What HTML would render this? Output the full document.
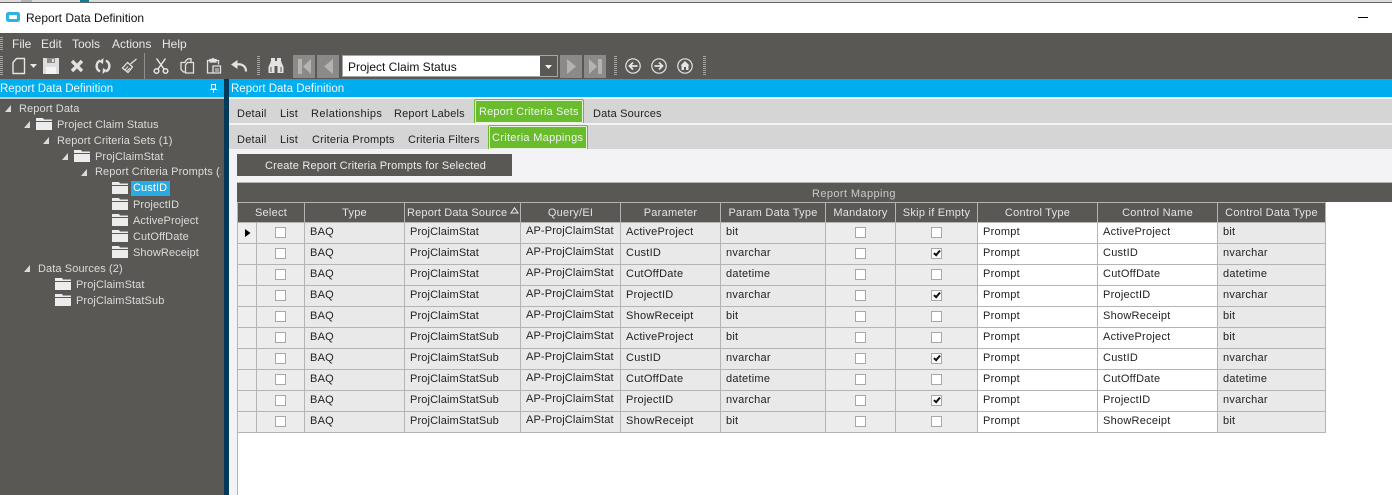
<!DOCTYPE html>
<html><head><meta charset="utf-8"><title>Report Data Definition</title>
<style>
html,body{margin:0;padding:0;background:#fff}
body{position:relative;width:1392px;height:495px;overflow:hidden;font-family:"Liberation Sans",Arial,sans-serif;font-size:11px;color:#222}
.b{position:absolute}
.t{position:absolute;white-space:nowrap;line-height:14px}
.m{color:#e8e8e8;font-size:12px;top:37px}
.s{color:#dcdcdc;font-size:11px;letter-spacing:.1px}
.h{color:#222;font-size:11px;letter-spacing:.25px}
.g{color:#f2f2f2;font-size:11px;letter-spacing:.2px}
.f{position:absolute;width:16px;height:12px}
.tr{position:absolute;width:0;height:0;border-left:6px solid transparent;border-bottom:7px solid #dcdcdc}
.gr{position:absolute;width:3px;background:repeating-linear-gradient(#a5a5a5 0 1px,transparent 1px 2px)}
.btn{position:absolute;top:55px;width:22px;height:23px;background:#8b8a88}
svg{position:absolute;overflow:visible}
table{position:absolute;border-collapse:collapse;table-layout:fixed;width:1088px;left:237px}
td,th{border:1px solid #b4b4b4;padding:0;overflow:hidden;white-space:nowrap;font-weight:normal;letter-spacing:.25px}
th{height:18px;padding-top:1px;background:#595855;color:#e4e4e4;font-size:11px}
th.l{text-align:left;padding-left:2px;letter-spacing:.17px}
td{height:21px;background:#e9e9e9;font-size:11px;color:#222;padding:0 0 3px 5px;box-sizing:border-box}
td:nth-child(4){letter-spacing:.13px}
td.n{padding:0;background:#eee}
td.q{padding-bottom:5px;letter-spacing:.13px}
td.w{background:#fff}
td.x{padding:0 0 2px;text-align:center;background:#ececec}
i{display:inline-block;width:9px;height:9px;border:1px solid #a8a8a8;background:#fff;position:relative;vertical-align:middle}
i.k:after{content:"";position:absolute;left:3px;top:0;width:2px;height:5px;border:solid #111;border-width:0 2px 2px 0;transform:rotate(40deg)}
</style></head><body>

<div class="b" style="left:0;top:0;width:1392px;height:2px;background:#dcdcdc"></div>
<div class="b" style="left:21px;top:0;width:11px;height:2px;background:#b5b5b5"></div>
<div class="b" style="left:80px;top:0;width:9px;height:2px;background:#0d7f9c"></div>
<div class="b" style="left:0;top:2px;width:1392px;height:1px;background:#666"></div>

<svg style="left:6px;top:12px" width="15" height="11" viewBox="0 0 15 11"><rect x="0" y="0" width="14" height="10" rx="2.5" fill="#2cb2e4"/><rect x="3" y="3" width="8" height="4" rx="1" fill="#fff"/></svg>
<span class="t" style="left:26px;top:11px;font-size:12px;color:#111">Report Data Definition</span>
<div class="b" style="left:1358px;top:17px;width:10px;height:1px;background:#000"></div>

<div class="b" style="left:0;top:33px;width:1392px;height:46px;background:#595855"></div>
<div class="gr" style="left:0;top:37px;height:14px"></div>
<div class="gr" style="left:0;top:56px;height:20px"></div>
<span class="t m" style="left:12px">File</span>
<span class="t m" style="left:41px">Edit</span>
<span class="t m" style="left:72px">Tools</span>
<span class="t m" style="left:112px">Actions</span>
<span class="t m" style="left:162px">Help</span>

<svg style="left:11px;top:57px" width="16" height="18" viewBox="0 0 16 18" fill="none" stroke="#e6e6e6" stroke-width="1.4"><path d="M5.5 1.5H13.5V16.5H2V5.5Z" stroke-linejoin="round"/></svg>
<svg style="left:30px;top:64px" width="7" height="4" viewBox="0 0 7 4"><path d="M0 0H7L3.5 4Z" fill="#e6e6e6"/></svg>
<svg style="left:43px;top:58px" width="16" height="16" viewBox="0 0 16 16"><path d="M0 0H16V16H0Z" fill="#dedede"/><path d="M4 0H12V5H4Z" fill="#8c8b89"/><path d="M9 1H11V4H9Z" fill="#dedede"/><path d="M3 9H13V16H3Z" fill="#f4f4f4"/></svg>
<svg style="left:70px;top:59px" width="14" height="14" viewBox="0 0 14 14"><path d="M2 2L12 12M12 2L2 12" stroke="#e2e2e2" stroke-width="3.4"/></svg>
<svg style="left:95px;top:58px" width="16" height="16" viewBox="0 0 16 16" fill="none" stroke="#e2e2e2" stroke-width="2.4"><path d="M5 13.5C0.5 11 0.5 5 5 2.5"/><path d="M11 2.5C15.5 5 15.5 11 11 13.5"/><path d="M8.5 0L4 3.5L8 6Z" fill="#e2e2e2" stroke="none"/><path d="M7.5 16L12 12.5L8 10Z" fill="#e2e2e2" stroke="none"/></svg>
<svg style="left:121px;top:58px" width="17" height="16" viewBox="0 0 17 16" fill="none" stroke="#e2e2e2" stroke-width="1.3"><path d="M9.5 6L15.5 1"/><path d="M6.5 4.5L11.5 9L7 14.5L1.5 10Z"/><path d="M4 12L7 8.5M6 13L9 10" stroke-width="1"/></svg>
<div class="b" style="left:144px;top:53px;width:1px;height:26px;background:#8f8e8c"></div>
<svg style="left:153px;top:58px" width="16" height="16" viewBox="0 0 16 16" fill="none" stroke="#e6e6e6" stroke-width="1.5"><circle cx="3.5" cy="13" r="2.3"/><circle cx="12.5" cy="13" r="2.3"/><path d="M5 11L12.5 0.5M11 11L3.5 0.5"/></svg>
<svg style="left:180px;top:58px" width="15" height="16" viewBox="0 0 15 16" fill="none" stroke="#e2e2e2" stroke-width="1.3"><path d="M5 3.5L8 .8H11V4"/><path d="M5 3.5V4.5H1V11.5L3.5 14H5"/><path d="M7.5 4.5H13.5V15H5.5V7Z"/></svg>
<svg style="left:206px;top:58px" width="15" height="16" viewBox="0 0 15 16" fill="none" stroke="#e2e2e2" stroke-width="1.3"><path d="M4 2.5H1.5V15H6.5"/><path d="M10 2.5H12.5V6.5"/><path d="M4 1.5H6L7 .5L8 1.5H10V4H4Z" fill="#e2e2e2"/><path d="M7 8H14.5V15H7Z"/><path d="M9 11H13M9 13H13" stroke-width="1"/></svg>
<svg style="left:231px;top:60px" width="16" height="12" viewBox="0 0 16 12" fill="none"><path d="M15 11.5C15 6 11 3.5 5 4.5" stroke="#e2e2e2" stroke-width="2.2"/><path d="M6.5 0L0 4.5L6.5 9Z" fill="#e2e2e2"/></svg>
<div class="gr" style="left:257px;top:56px;height:19px"></div>
<svg style="left:268px;top:58px" width="16" height="15" viewBox="0 0 16 15"><path d="M3 0H7V3H9V0H13V3L15.5 9V15H9.5V8H6.5V15H.5V9L3 3Z" fill="#e2e2e2"/><path d="M3 9V14M13 9V14" stroke="#595855"/></svg>

<div class="btn" style="left:293px"></div>
<svg style="left:298px;top:59px" width="13" height="15" viewBox="0 0 13 15"><path d="M0 0H4V15H0ZM13 0V15L5 7.5Z" fill="#b4b3b2"/></svg>
<div class="btn" style="left:317px"></div>
<svg style="left:324px;top:59px" width="9" height="15" viewBox="0 0 9 15"><path d="M9 0V15L0 7.5Z" fill="#b4b3b2"/></svg>
<div class="b" style="left:342px;top:55px;width:214px;height:20px;border:1px solid #a5a5a5;background:#fff"></div>
<div class="b" style="left:540px;top:56px;width:17px;height:20px;background:#595855"></div>
<svg style="left:545px;top:65px" width="7" height="4" viewBox="0 0 7 4"><path d="M0 0H7L3.5 4Z" fill="#f2f2f2"/></svg>
<span class="t" style="left:348px;top:60px;font-size:12px;color:#111">Project Claim Status</span>
<div class="btn" style="left:560px"></div>
<svg style="left:567px;top:59px" width="9" height="15" viewBox="0 0 9 15"><path d="M0 0V15L9 7.5Z" fill="#b4b3b2"/></svg>
<div class="btn" style="left:584px"></div>
<svg style="left:589px;top:59px" width="13" height="15" viewBox="0 0 13 15"><path d="M0 0V15L8 7.5ZM9 0H13V15H9Z" fill="#b4b3b2"/></svg>
<div class="gr" style="left:614px;top:56px;height:19px"></div>
<svg style="left:625px;top:58px" width="16" height="16" viewBox="0 0 16 16" fill="none" stroke="#e4e4e4"><circle cx="8" cy="8" r="7.2" stroke-width="1.2"/><path d="M12.5 8H4.5M8 4.5L4.5 8L8 11.5" stroke-width="1.8"/></svg>
<svg style="left:651px;top:58px" width="16" height="16" viewBox="0 0 16 16" fill="none" stroke="#e4e4e4"><circle cx="8" cy="8" r="7.2" stroke-width="1.2"/><path d="M3.5 8H11.5M8 4.5L11.5 8L8 11.5" stroke-width="1.8"/></svg>
<svg style="left:677px;top:58px" width="16" height="16" viewBox="0 0 16 16" fill="none" stroke="#e4e4e4"><circle cx="8" cy="8" r="7.2" stroke-width="1.2"/><path d="M8 3L12.5 7.5H11.5V12H4.5V7.5H3.5Z" fill="#e4e4e4" stroke="none"/><path d="M7 9H9V12H7Z" fill="#595855" stroke="none"/></svg>
<div class="gr" style="left:703px;top:56px;height:19px"></div>

<div class="b" style="left:0;top:79px;width:224px;height:18px;background:#00adef"></div>
<div class="b" style="left:229px;top:79px;width:1163px;height:18px;background:#00adef"></div>
<span class="t" style="left:0;top:82px;font-size:11.5px;color:#f0fbff">Report Data Definition</span>
<span class="t" style="left:231px;top:82px;font-size:11.5px;color:#f0fbff">Report Data Definition</span>
<svg style="left:210px;top:84px" width="7" height="9" viewBox="0 0 7 9" fill="none" stroke="#fff"><path d="M1.5 .5H5.5V5H1.5ZM0 5.5H7M3.5 5.5V9"/></svg>

<div class="b" style="left:224px;top:79px;width:5px;height:416px;background:#033a5a"></div>

<div class="b" style="left:0;top:97px;width:224px;height:398px;background:#595855;border-top:2px solid #c9c9c9;box-sizing:border-box"></div>

<div class="tr" style="left:5px;top:105px"></div><span class="t s" style="left:19px;top:102px">Report Data</span>
<div class="tr" style="left:24px;top:121px"></div><span class="t s" style="left:57px;top:118px">Project Claim Status</span>
<div class="tr" style="left:43px;top:137px"></div><span class="t s" style="left:57px;top:134px">Report Criteria Sets (1)</span>
<div class="tr" style="left:62px;top:153px"></div><span class="t s" style="left:95px;top:150px">ProjClaimStat</span>
<div class="tr" style="left:81px;top:169px"></div><span class="t s" style="left:95px;top:165px;width:126px;overflow:hidden">Report Criteria Prompts (1)</span>
<div class="b" style="left:131px;top:181px;width:39px;height:15px;background:#29abe2"></div>
<span class="t s" style="left:133px;top:181px;color:#fff">CustID</span>
<span class="t s" style="left:133px;top:198px">ProjectID</span>
<span class="t s" style="left:133px;top:214px">ActiveProject</span>
<span class="t s" style="left:133px;top:230px">CutOffDate</span>
<span class="t s" style="left:133px;top:246px">ShowReceipt</span>
<div class="tr" style="left:24px;top:265px"></div><span class="t s" style="left:38px;top:262px">Data Sources (2)</span>
<span class="t s" style="left:76px;top:278px">ProjClaimStat</span>
<span class="t s" style="left:76px;top:294px">ProjClaimStatSub</span>

<svg class="f" style="left:36px;top:118px" viewBox="0 0 16 12"><path d="M0 0H7L8 1.5H16V3H0ZM0 4H16V12H0Z" fill="#ececec"/></svg>
<svg class="f" style="left:74px;top:150px" viewBox="0 0 16 12"><path d="M0 0H7L8 1.5H16V3H0ZM0 4H16V12H0Z" fill="#ececec"/></svg>
<svg class="f" style="left:112px;top:182px" viewBox="0 0 16 12"><path d="M0 0H7L8 1.5H16V3H0ZM0 4H16V12H0Z" fill="#ececec"/></svg>
<svg class="f" style="left:112px;top:198px" viewBox="0 0 16 12"><path d="M0 0H7L8 1.5H16V3H0ZM0 4H16V12H0Z" fill="#ececec"/></svg>
<svg class="f" style="left:112px;top:214px" viewBox="0 0 16 12"><path d="M0 0H7L8 1.5H16V3H0ZM0 4H16V12H0Z" fill="#ececec"/></svg>
<svg class="f" style="left:112px;top:230px" viewBox="0 0 16 12"><path d="M0 0H7L8 1.5H16V3H0ZM0 4H16V12H0Z" fill="#ececec"/></svg>
<svg class="f" style="left:112px;top:246px" viewBox="0 0 16 12"><path d="M0 0H7L8 1.5H16V3H0ZM0 4H16V12H0Z" fill="#ececec"/></svg>
<svg class="f" style="left:55px;top:278px" viewBox="0 0 16 12"><path d="M0 0H7L8 1.5H16V3H0ZM0 4H16V12H0Z" fill="#ececec"/></svg>
<svg class="f" style="left:55px;top:294px" viewBox="0 0 16 12"><path d="M0 0H7L8 1.5H16V3H0ZM0 4H16V12H0Z" fill="#ececec"/></svg>

<div class="b" style="left:229px;top:97px;width:1163px;height:398px;background:#f3f3f6"></div>
<div class="b" style="left:229px;top:99px;width:1163px;height:24px;background:#d5d5d5"></div>
<div class="b" style="left:229px;top:125px;width:1163px;height:24px;background:#d5d5d5"></div>

<span class="t h" style="left:237px;top:107px">Detail</span>
<span class="t h" style="left:280px;top:107px">List</span>
<span class="t h" style="left:311px;top:107px;letter-spacing:.4px">Relationships</span>
<span class="t h" style="left:394px;top:107px;letter-spacing:.18px">Report Labels</span>
<div class="b" style="left:474px;top:99px;width:110px;height:24px;box-sizing:border-box;background:#69bd2c;border:1px solid #69bd2c;box-shadow:inset 0 0 0 1px #e8f5dc;border-bottom:0;border-radius:2px 2px 0 0"></div>
<span class="t g" style="left:479px;top:105px;letter-spacing:.15px">Report Criteria Sets</span>
<span class="t h" style="left:593px;top:107px;letter-spacing:.17px">Data Sources</span>

<span class="t h" style="left:237px;top:133px">Detail</span>
<span class="t h" style="left:280px;top:133px">List</span>
<span class="t h" style="left:312px;top:133px;letter-spacing:.2px">Criteria Prompts</span>
<span class="t h" style="left:408px;top:133px;letter-spacing:.2px">Criteria Filters</span>
<div class="b" style="left:488px;top:125px;width:100px;height:24px;box-sizing:border-box;background:#69bd2c;border:1px solid #69bd2c;box-shadow:inset 0 0 0 1px #e8f5dc;border-bottom:0;border-radius:2px 2px 0 0"></div>
<span class="t g" style="left:492px;top:131px;letter-spacing:.3px">Criteria Mappings</span>

<div class="b" style="left:237px;top:154px;width:275px;height:22px;background:#595855"></div>
<span class="t" style="left:265px;top:159px;color:#ececec;font-size:11px;letter-spacing:.18px">Create Report Criteria Prompts for Selected</span>

<div class="b" style="left:237px;top:182px;width:1155px;height:313px;background:#fff;border-left:1px solid #b4b4b4;box-sizing:border-box"></div>
<div class="b" style="left:237px;top:182px;width:1155px;height:20px;background:#595855;border-top:1px solid #b4b4b4;box-sizing:border-box"></div>
<span class="t" style="left:812px;top:187px;color:#c9c9c9;font-size:11px;letter-spacing:.4px">Report Mapping</span>

<table style="top:202px"><colgroup><col style="width:19px"><col style="width:48px"><col style="width:100px"><col style="width:116px"><col style="width:100px"><col style="width:100px"><col style="width:105px"><col style="width:70px"><col style="width:82px"><col style="width:120px"><col style="width:120px"><col style="width:108px"></colgroup>
<tr><th colspan="2">Select</th><th>Type</th><th class="l">Report Data Source</th><th>Query/EI</th><th>Parameter</th><th>Param Data Type</th><th>Mandatory</th><th>Skip if Empty</th><th>Control Type</th><th>Control Name</th><th>Control Data Type</th></tr>
</table>
<svg style="left:510px;top:207px" width="9" height="7" viewBox="0 0 9 7"><path d="M4.5 .8L8 6H1Z" fill="none" stroke="#e8e8e8"/></svg>

<table style="top:222px"><colgroup><col style="width:19px"><col style="width:48px"><col style="width:100px"><col style="width:116px"><col style="width:100px"><col style="width:100px"><col style="width:105px"><col style="width:70px"><col style="width:82px"><col style="width:120px"><col style="width:120px"><col style="width:108px"></colgroup>
<tr><td class="n"></td><td class="x"><i></i></td><td>BAQ</td><td>ProjClaimStat</td><td class="q">AP-ProjClaimStat</td><td>ActiveProject</td><td>bit</td><td class="x"><i></i></td><td class="x"><i></i></td><td class="w">Prompt</td><td class="w">ActiveProject</td><td>bit</td></tr>
<tr><td class="n"></td><td class="x"><i></i></td><td>BAQ</td><td>ProjClaimStat</td><td class="q">AP-ProjClaimStat</td><td>CustID</td><td>nvarchar</td><td class="x"><i></i></td><td class="x"><i class="k"></i></td><td class="w">Prompt</td><td class="w">CustID</td><td>nvarchar</td></tr>
<tr><td class="n"></td><td class="x"><i></i></td><td>BAQ</td><td>ProjClaimStat</td><td class="q">AP-ProjClaimStat</td><td>CutOffDate</td><td>datetime</td><td class="x"><i></i></td><td class="x"><i></i></td><td class="w">Prompt</td><td class="w">CutOffDate</td><td>datetime</td></tr>
<tr><td class="n"></td><td class="x"><i></i></td><td>BAQ</td><td>ProjClaimStat</td><td class="q">AP-ProjClaimStat</td><td>ProjectID</td><td>nvarchar</td><td class="x"><i></i></td><td class="x"><i class="k"></i></td><td class="w">Prompt</td><td class="w">ProjectID</td><td>nvarchar</td></tr>
<tr><td class="n"></td><td class="x"><i></i></td><td>BAQ</td><td>ProjClaimStat</td><td class="q">AP-ProjClaimStat</td><td>ShowReceipt</td><td>bit</td><td class="x"><i></i></td><td class="x"><i></i></td><td class="w">Prompt</td><td class="w">ShowReceipt</td><td>bit</td></tr>
<tr><td class="n"></td><td class="x"><i></i></td><td>BAQ</td><td>ProjClaimStatSub</td><td class="q">AP-ProjClaimStat</td><td>ActiveProject</td><td>bit</td><td class="x"><i></i></td><td class="x"><i></i></td><td class="w">Prompt</td><td class="w">ActiveProject</td><td>bit</td></tr>
<tr><td class="n"></td><td class="x"><i></i></td><td>BAQ</td><td>ProjClaimStatSub</td><td class="q">AP-ProjClaimStat</td><td>CustID</td><td>nvarchar</td><td class="x"><i></i></td><td class="x"><i class="k"></i></td><td class="w">Prompt</td><td class="w">CustID</td><td>nvarchar</td></tr>
<tr><td class="n"></td><td class="x"><i></i></td><td>BAQ</td><td>ProjClaimStatSub</td><td class="q">AP-ProjClaimStat</td><td>CutOffDate</td><td>datetime</td><td class="x"><i></i></td><td class="x"><i></i></td><td class="w">Prompt</td><td class="w">CutOffDate</td><td>datetime</td></tr>
<tr><td class="n"></td><td class="x"><i></i></td><td>BAQ</td><td>ProjClaimStatSub</td><td class="q">AP-ProjClaimStat</td><td>ProjectID</td><td>nvarchar</td><td class="x"><i></i></td><td class="x"><i class="k"></i></td><td class="w">Prompt</td><td class="w">ProjectID</td><td>nvarchar</td></tr>
<tr><td class="n"></td><td class="x"><i></i></td><td>BAQ</td><td>ProjClaimStatSub</td><td class="q">AP-ProjClaimStat</td><td>ShowReceipt</td><td>bit</td><td class="x"><i></i></td><td class="x"><i></i></td><td class="w">Prompt</td><td class="w">ShowReceipt</td><td>bit</td></tr>
</table>
<svg style="left:245px;top:229px" width="6" height="8" viewBox="0 0 6 8"><path d="M0 0L5.5 4L0 8Z" fill="#000"/></svg>

</body></html>
